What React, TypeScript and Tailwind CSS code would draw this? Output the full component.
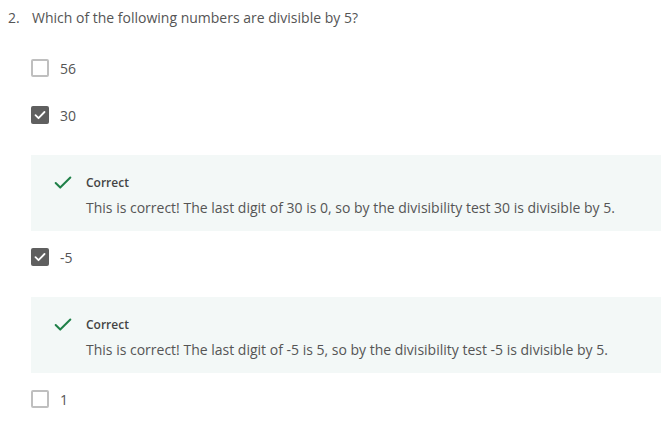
import { Check } from 'lucide-react';

type Option = {
  label: string;
  checked: boolean;
  feedback?: string;
};

const options: Option[] = [
  { label: '56', checked: false },
  {
    label: '30',
    checked: true,
    feedback:
      'This is correct! The last digit of 30 is 0, so by the divisibility test 30 is divisible by 5.',
  },
  {
    label: '-5',
    checked: true,
    feedback:
      'This is correct! The last digit of -5 is 5, so by the divisibility test -5 is divisible by 5.',
  },
  { label: '1', checked: false },
];

function Checkbox({ checked }: { checked: boolean }) {
  if (checked) {
    return (
      <span className="w-[18px] h-[18px] rounded-[2px] bg-[#5f5f5f] flex items-center justify-center shrink-0">
        <svg width="14" height="14" viewBox="0 0 14 14" fill="none">
          <path d="M2.5 7.2l3 3 6-6.2" stroke="#fff" strokeWidth="1.8" strokeLinecap="round" strokeLinejoin="round" />
        </svg>
      </span>
    );
  }
  return <span className="w-[18px] h-[18px] rounded-[2px] border-2 border-[#bfbfbf] bg-white shrink-0" />;
}

export default function App() {
  return (
    <div
      className="w-[661px] h-[434px] bg-white text-[#555] overflow-hidden"
      style={{ fontFamily: '"Open Sans", "Liberation Sans", sans-serif' }}
    >
      <div className="flex pl-[8px] pt-[8px] text-[14px] leading-[19px]">
        <span className="w-[24px]">2.</span>
        <span>Which of the following numbers are divisible by 5?</span>
      </div>

      <div className="pl-[31px] pt-[32px]">
        {options.map((opt) => (
          <div key={opt.label}>
            <div className={opt.feedback ? 'flex items-center h-[18px] mb-[31px]' : 'flex items-center h-[18px] mb-[29px]'}>
              <Checkbox checked={opt.checked} />
              <span className="ml-[11px] text-[14px]">{opt.label}</span>
            </div>
            {opt.feedback && (
              <div className="bg-[#f3f8f7] h-[76px] mb-[17px] flex pl-[21px] pt-[19px]">
                <Check className="w-[22px] h-[22px] text-[#1f8048] -mt-[2px]" strokeWidth={2.2} />
                <div className="ml-[12px]">
                  <div className="text-[12px] font-semibold text-[#444] leading-[18px]">Correct</div>
                  <div className="text-[14px] leading-[18px] mt-[7px]">{opt.feedback}</div>
                </div>
              </div>
            )}
          </div>
        ))}
      </div>
    </div>
  );
}
